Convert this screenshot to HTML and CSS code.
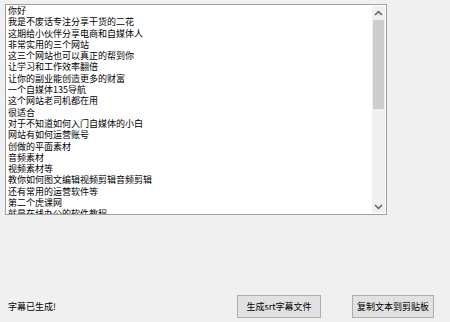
FILE: index.html
```html
<!DOCTYPE html>
<html lang="zh-CN">
<head>
    <meta charset="UTF-8">
    <title>字幕生成</title>
    <link rel="stylesheet" href="styles.css">
</head>
<body>
    <div class="text-box">
        <div class="text-lines">
            <div>你好</div>
            <div>我是不废话专注分享干货的二花</div>
            <div>这期给小伙伴分享电商和自媒体人</div>
            <div>非常实用的三个网站</div>
            <div>这三个网站也可以真正的帮到你</div>
            <div>让学习和工作效率翻倍</div>
            <div>让你的副业能创造更多的财富</div>
            <div>一个自媒体135导航</div>
            <div>这个网站老司机都在用</div>
            <div>很适合</div>
            <div>对于不知道如何入门自媒体的小白</div>
            <div>网站有如何运营账号</div>
            <div>创做的平面素材</div>
            <div>音频素材</div>
            <div>视频素材等</div>
            <div>教你如何图文编辑视频剪辑音频剪辑</div>
            <div>还有常用的运营软件等</div>
            <div>第二个虎课网</div>
            <div>就是在线办公的软件教程</div>
        </div>
        <div class="scrollbar">
            <div class="arrow">
                <svg width="9" height="6" viewBox="0 0 9 6"><path d="M1 5 L4.5 1.5 L8 5" fill="none" stroke="#606060" stroke-width="1.5"/></svg>
            </div>
            <div class="track">
                <div class="thumb"></div>
            </div>
            <div class="arrow">
                <svg width="9" height="6" viewBox="0 0 9 6"><path d="M1 1 L4.5 4.5 L8 1" fill="none" stroke="#606060" stroke-width="1.5"/></svg>
            </div>
        </div>
    </div>

    <div class="bottom-bar">
        <span class="status">字幕已生成!</span>
        <button class="btn btn-srt">生成srt字幕文件</button>
        <button class="btn btn-copy">复制文本到剪贴板</button>
    </div>
</body>
</html>
```

FILE: styles.css
```css
body {
    margin: 0;
    width: 450px;
    height: 322px;
    background-color: #f0f0f0;
    font-family: "Noto Sans CJK SC", "Noto Sans", sans-serif;
    font-size: 9px;
    color: #000;
    overflow: hidden;
}
.text-box {
    display: flex;
    margin: 4px 0 0 5px;
    width: 380px;
    height: 209px;
    border: 1px solid #a0a0a0;
    background-color: #fff;
}
.text-lines {
    flex: 1;
    overflow: hidden;
    padding: 0 0 0 2px;
    line-height: 11.3px;
}
.scrollbar {
    width: 13px;
    margin: 1px 1px 1px 0;
    display: flex;
    flex-direction: column;
    background-color: #f0f0f0;
}
.arrow {
    height: 13px;
    display: flex;
    align-items: center;
    justify-content: center;
}
.track {
    flex: 1;
    display: flex;
    flex-direction: column;
    padding: 1px 1px;
}
.thumb {
    height: 89px;
    background-color: #cdcdcd;
}
.bottom-bar {
    display: flex;
    align-items: center;
    margin-top: 80px;
    padding: 0 16px 0 8px;
}
.status {
    flex: 1;
    line-height: 22px;
}
.btn {
    height: 23px;
    padding: 0;
    font-family: inherit;
    font-size: 9px;
    color: #000;
    background-color: #e1e1e1;
    border: 1px solid #adadad;
}
.btn-srt {
    width: 84px;
    margin-right: 31px;
}
.btn-copy {
    width: 82px;
}
```
